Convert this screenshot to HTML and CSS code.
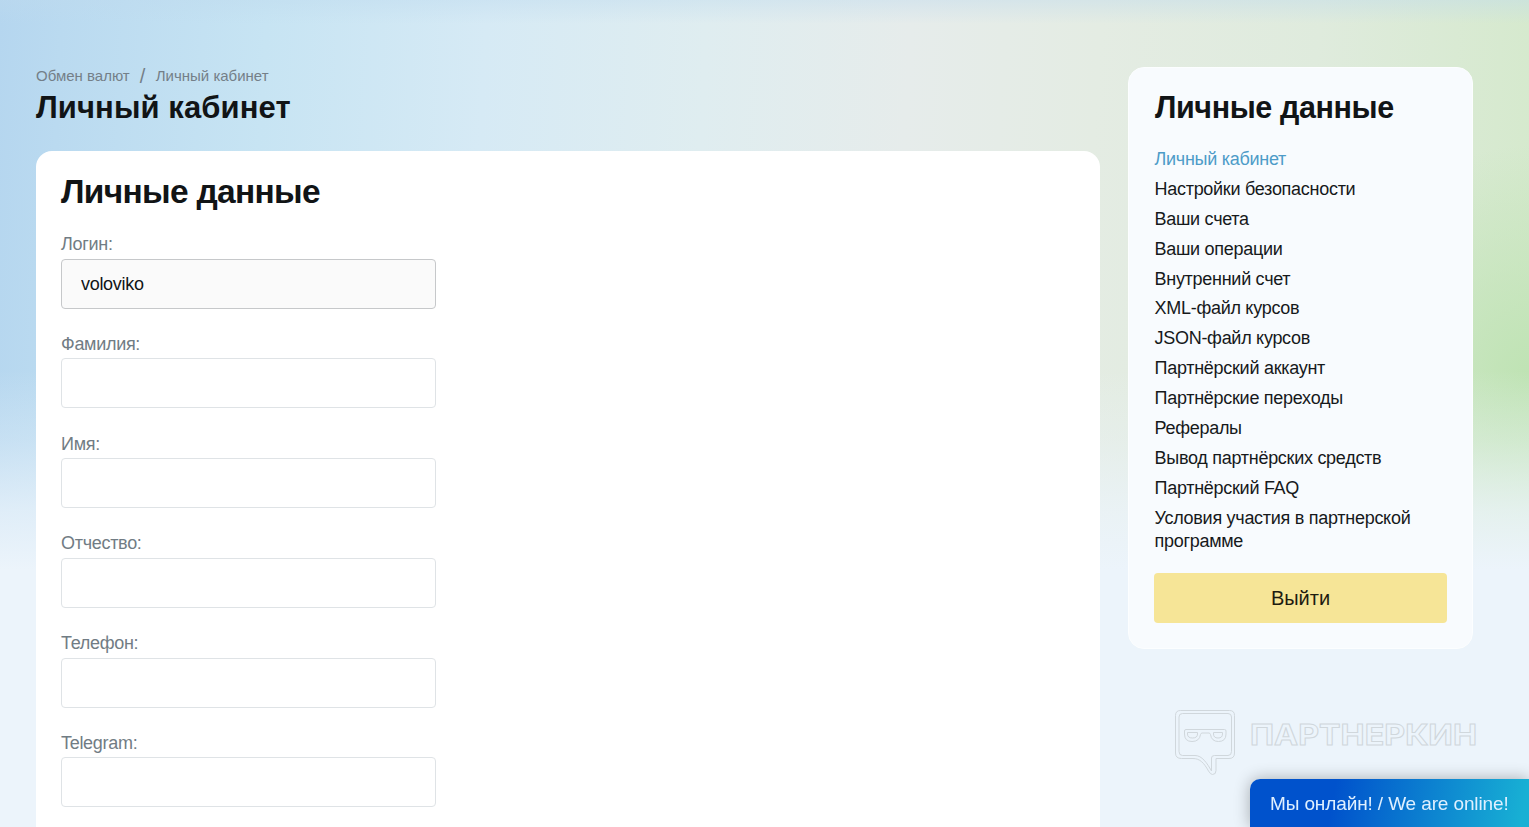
FILE: index.html
```html
<!DOCTYPE html>
<html lang="ru">
<head>
    <meta charset="UTF-8">
    <meta name="viewport" content="width=device-width, initial-scale=1.0">
    <title>Личный кабинет</title>
    <link rel="stylesheet" href="styles.css">
</head>
<body>

<div class="page">
    <main class="content">
        <nav class="breadcrumbs">
            <a href="#">Обмен валют</a>
            <span class="separator">/</span>
            <span>Личный кабинет</span>
        </nav>
        <h1>Личный кабинет</h1>

        <form class="card">
            <h2>Личные данные</h2>

            <div class="field">
                <label for="login">Логин:</label>
                <input type="text" id="login" value="voloviko" disabled>
            </div>
            <div class="field">
                <label for="lastName">Фамилия:</label>
                <input type="text" id="lastName">
            </div>
            <div class="field">
                <label for="firstName">Имя:</label>
                <input type="text" id="firstName">
            </div>
            <div class="field">
                <label for="secondName">Отчество:</label>
                <input type="text" id="secondName">
            </div>
            <div class="field">
                <label for="phone">Телефон:</label>
                <input type="text" id="phone">
            </div>
            <div class="field">
                <label for="telegram">Telegram:</label>
                <input type="text" id="telegram">
            </div>
        </form>
    </main>

    <aside class="sidebar">
        <div class="sidebar-card">
            <h3>Личные данные</h3>
            <ul class="menu">
                <li><a href="#" class="active">Личный кабинет</a></li>
                <li><a href="#">Настройки безопасности</a></li>
                <li><a href="#">Ваши счета</a></li>
                <li><a href="#">Ваши операции</a></li>
                <li><a href="#">Внутренний счет</a></li>
                <li><a href="#">XML-файл курсов</a></li>
                <li><a href="#">JSON-файл курсов</a></li>
                <li><a href="#">Партнёрский аккаунт</a></li>
                <li><a href="#">Партнёрские переходы</a></li>
                <li><a href="#">Рефералы</a></li>
                <li><a href="#">Вывод партнёрских средств</a></li>
                <li><a href="#">Партнёрский FAQ</a></li>
                <li><a href="#">Условия участия в партнерской программе</a></li>
            </ul>
            <a href="#" class="logout">Выйти</a>
        </div>

        <svg class="watermark" width="320" height="70" viewBox="0 0 320 70">
            <path d="M5.500 .5H54.500Q59.500 .5 59.500 5.500V43Q59.500 48.500 54 48.500H41V60.500Q41 64.500 37.500 64.500Q35.500 64.500 33.500 61C29 53 25 48.500 18 48.500H6.500Q.5 48.500 .5 43V5.500Q.5 .5 5.500 .5Z"/>
            <path d="M7.500 3.500H53Q56.500 3.500 56.500 7V41.500Q56.500 45.500 53 45.500H39.500Q36.500 45.500 36.500 48V61C32 53 27 45.500 20 45.500H7.500Q4 45.500 4 41.500V7Q4 3.500 7.500 3.500Z"/>
            <path d="M11 19.500H49.500Q51 19.500 51 21V24Q51 31.500 43.500 31.500Q36.500 31.500 35.500 24.500Q35 23 34 23H27Q26 23 25.500 24.500Q24.500 31.500 17 31.500Q9.500 31.500 9.500 24V21Q9.500 19.500 11 19.500Z"/>
            <path d="M12.500 22.500H22.500V24Q22.500 28 17.500 28Q12.500 28 12.500 24ZM38.500 22.500H47.500V24Q47.500 28 43 28Q38.500 28 38.500 24Z"/>
            <text x="75" y="34.500" textLength="227" lengthAdjust="spacingAndGlyphs">ПАРТНЕРКИН</text>
        </svg>
    </aside>
</div>

<div class="chat-button">Мы онлайн! / We are online!</div>

</body>
</html>
```
FILE: styles.css
```css
* {
    box-sizing: border-box;
}

body {
    font-family: "Liberation Sans", Arial, sans-serif;
    margin: 0;
    height: 827px;
    overflow: hidden;
    color: #111416;
    background-color: #ecf4fb;
    background-image:
        linear-gradient(to bottom, rgba(236, 244, 251, 0) 370px, rgba(236, 244, 251, 0.3) 440px, rgba(236, 244, 251, 0.75) 510px, #ecf4fb 570px),
        radial-gradient(ellipse 200px 230px at 1529px 375px, #bfe3b4, rgba(197, 233, 176, 0)),
        linear-gradient(to bottom, rgba(190, 218, 238, 0.4), rgba(208, 228, 241, 0) 24px),
        linear-gradient(93deg, #b5d6ef 0%, #badaf0 4%, #c7e4f3 17%, #d6eaf5 31%, #dfedf0 45%, #e6eceb 58%, #e4ece3 70%, #dfebdd 84%, #d4e9cb 100%);
}

.page {
    display: flex;
    gap: 28px;
    height: 827px;
    padding: 67px 56px 0 36px;
}

.content {
    display: flex;
    flex-direction: column;
    width: 1064px;
}

.breadcrumbs {
    display: flex;
    align-items: center;
    gap: 10px;
    height: 17px;
    font-size: 15px;
    color: #747f88;
}

.breadcrumbs a {
    color: inherit;
    text-decoration: none;
}

.separator {
    width: 6px;
    font-size: 20px;
    line-height: 18px;
}

h1, h2, h3 {
    margin: 0;
    font-weight: bold;
}

h1 {
    padding-top: 4px;
    margin-bottom: 23px;
    font-size: 31px;
    line-height: 40px;
    letter-spacing: 0.1px;
}

.card {
    flex: 1;
    padding: 20px 25px 0;
    background-color: white;
    border-radius: 16px 16px 0 0;
}

h2 {
    padding-top: 1px;
    margin-bottom: 21px;
    font-size: 33.5px;
    line-height: 40px;
    letter-spacing: -0.7px;
}

.field {
    height: 99.77px;
}

.field:last-child {
    height: 75px;
}

label {
    display: block;
    height: 25.6px;
    font-size: 18px;
    line-height: 22px;
    letter-spacing: -0.3px;
    color: #717c84;
}

input {
    display: block;
    width: 375px;
    height: 50px;
    padding: 1px 19px 0;
    font-family: inherit;
    font-size: 18px;
    letter-spacing: -0.3px;
    color: #111416;
    background-color: white;
    border: 1px solid #dfe3e6;
    border-radius: 4px;
}

input:disabled {
    background-color: #fafafa;
    border-color: #c6c8ca;
}

.sidebar {
    width: 345px;
}

.sidebar-card {
    height: 582px;
    padding: 19px 25px;
    background-color: #f8fbfe;
    border: 1px solid #fcfeff;
    border-radius: 16px;
}

h3 {
    margin-bottom: 21px;
    padding-left: 1px;
    font-size: 30.5px;
    line-height: 40px;
    letter-spacing: -0.4px;
}

.menu {
    list-style: none;
    margin: 0 0 20px;
    padding: 0 0 0 0.5px;
    font-size: 18px;
    line-height: 23px;
    letter-spacing: -0.28px;
}

.menu li {
    margin-bottom: 6.9px;
}

.menu a {
    color: #16191b;
    text-decoration: none;
}

.menu .active {
    color: #4d9bc8;
}

.logout {
    display: block;
    height: 50px;
    font-size: 20px;
    line-height: 50px;
    text-align: center;
    text-decoration: none;
    color: #1d1c10;
    background-color: #f6e597;
    border-radius: 4px;
}

.watermark {
    display: block;
    margin: 61px 0 0 47px;
    fill: none;
    stroke: #d0d7dc;
    stroke-width: 1;
}

.watermark text {
    font-family: Inter, "Liberation Sans", sans-serif;
    font-size: 29px;
    font-weight: 700;
}

/* stays over the page in the corner */
.chat-button {
    position: fixed;
    right: 0;
    bottom: 0;
    width: 279px;
    height: 48px;
    padding-left: 20px;
    font-size: 19px;
    line-height: 49px;
    letter-spacing: -0.12px;
    white-space: nowrap;
    color: #dff0ff;
    background: linear-gradient(100deg, #0052cc 30%, #18b0d4 97%);
    border-top-left-radius: 10px;
    box-shadow: 0 0 16px rgba(0, 0, 0, 0.3);
}
```
